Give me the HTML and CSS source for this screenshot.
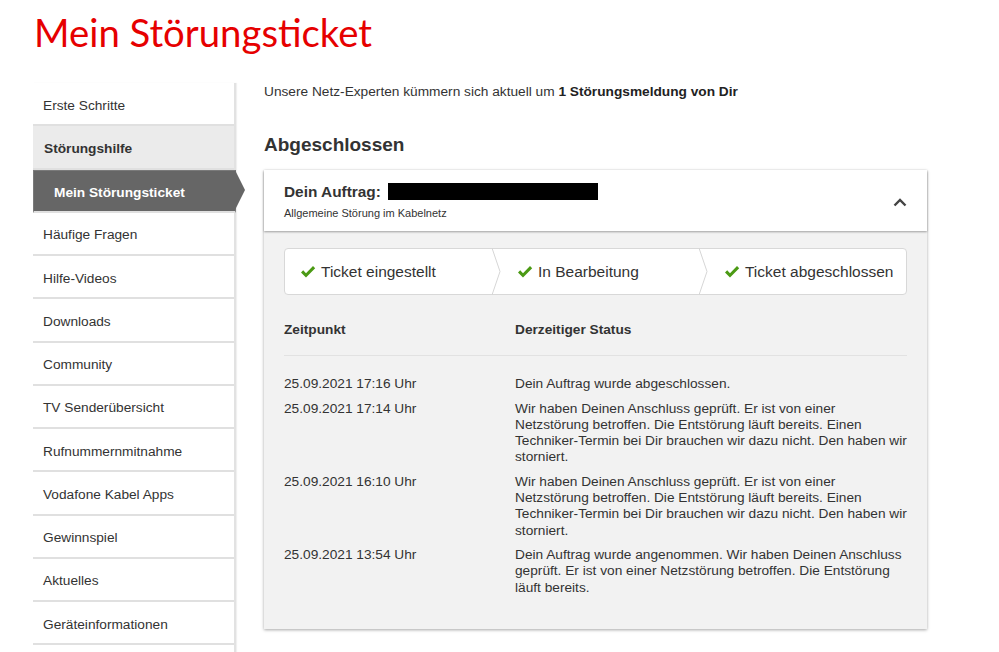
FILE: index.html
```html
<!DOCTYPE html>
<html lang="de">
<head>
<meta charset="utf-8">
<title>Mein Störungsticket</title>
<link rel="stylesheet" href="styles.css">
</head>
<body>
<div class="page">
  <h1 class="title">Mein Störungsticket</h1>
  <div class="layout">
    <nav class="sidebar">
      <a class="nav-item">Erste Schritte</a>
      <a class="nav-item nav-section">Störungshilfe</a>
      <a class="nav-item nav-active">Mein Störungsticket</a>
      <a class="nav-item">Häufige Fragen</a>
      <a class="nav-item">Hilfe-Videos</a>
      <a class="nav-item">Downloads</a>
      <a class="nav-item">Community</a>
      <a class="nav-item">TV Senderübersicht</a>
      <a class="nav-item">Rufnummernmitnahme</a>
      <a class="nav-item">Vodafone Kabel Apps</a>
      <a class="nav-item">Gewinnspiel</a>
      <a class="nav-item">Aktuelles</a>
      <a class="nav-item">Geräteinformationen</a>
    </nav>
    <main class="main">
      <p class="intro">Unsere Netz-Experten kümmern sich aktuell um <b>1 Störungsmeldung von Dir</b></p>
      <h2 class="section-title">Abgeschlossen</h2>
      <section class="card">
        <header class="card-head">
          <div class="card-head-text">
            <div class="order"><span class="order-label">Dein Auftrag:</span><span class="redacted"></span></div>
            <div class="order-sub">Allgemeine Störung im Kabelnetz</div>
          </div>
          <svg class="chev" width="14" height="9" viewBox="0 0 14 9"><polyline points="1.5,7.5 7,2 12.5,7.5" fill="none" stroke="#444" stroke-width="2.4"/></svg>
        </header>
        <div class="card-body">
          <div class="steps">
            <div class="step"><svg class="check" width="16" height="14" viewBox="0 0 16 14"><path d="M1 7.5 L3.2 5.3 L6 8.2 L13 1 L15.2 3.2 L6 12.6 Z" fill="#4b9a14"/></svg>Ticket eingestellt</div>
            <div class="step step-next"><svg class="sep" width="10" height="47" viewBox="0 0 10 47"><polyline points="0,0 8,23.5 0,47" fill="none" stroke="#d6d6d6" stroke-width="1"/></svg><svg class="check" width="16" height="14" viewBox="0 0 16 14"><path d="M1 7.5 L3.2 5.3 L6 8.2 L13 1 L15.2 3.2 L6 12.6 Z" fill="#4b9a14"/></svg>In Bearbeitung</div>
            <div class="step step-next"><svg class="sep" width="10" height="47" viewBox="0 0 10 47"><polyline points="0,0 8,23.5 0,47" fill="none" stroke="#d6d6d6" stroke-width="1"/></svg><svg class="check" width="16" height="14" viewBox="0 0 16 14"><path d="M1 7.5 L3.2 5.3 L6 8.2 L13 1 L15.2 3.2 L6 12.6 Z" fill="#4b9a14"/></svg>Ticket abgeschlossen</div>
          </div>
          <div class="table">
            <div class="row row-head"><div class="col-time">Zeitpunkt</div><div class="col-status">Derzeitiger Status</div></div>
            <div class="rows">
              <div class="row"><div class="col-time">25.09.2021 17:16 Uhr</div><div class="col-status">Dein Auftrag wurde abgeschlossen.</div></div>
              <div class="row"><div class="col-time">25.09.2021 17:14 Uhr</div><div class="col-status">Wir haben Deinen Anschluss geprüft. Er ist von einer Netzstörung betroffen. Die Entstörung läuft bereits. Einen Techniker-Termin bei Dir brauchen wir dazu nicht. Den haben wir storniert.</div></div>
              <div class="row"><div class="col-time">25.09.2021 16:10 Uhr</div><div class="col-status">Wir haben Deinen Anschluss geprüft. Er ist von einer Netzstörung betroffen. Die Entstörung läuft bereits. Einen Techniker-Termin bei Dir brauchen wir dazu nicht. Den haben wir storniert.</div></div>
              <div class="row"><div class="col-time">25.09.2021 13:54 Uhr</div><div class="col-status">Dein Auftrag wurde angenommen. Wir haben Deinen Anschluss geprüft. Er ist von einer Netzstörung betroffen. Die Entstörung läuft bereits.</div></div>
            </div>
          </div>
        </div>
      </section>
    </main>
  </div>
</div>
</body>
</html>
```
FILE: styles.css
```css
* { box-sizing: border-box; }
html, body { margin: 0; padding: 0; background: #fff; }
body {
  font-family: "Liberation Sans", Arial, sans-serif;
  color: #333;
  overflow: hidden;
  height: 652px;
}
.page { padding-left: 33px; }
.title {
  margin: 0;
  padding-top: 7px;
  height: 83px;
  font-family: Lato, "Open Sans", sans-serif;
  font-weight: 400;
  font-size: 38.3px;
  line-height: 50px;
  color: #e60000;
  padding-left: 1px;
}
.layout { display: flex; align-items: flex-start; }
.sidebar {
  width: 203px;
  flex: none;
  display: flex;
  flex-direction: column;
  border-right: 2px solid #e2e2e2;
  box-shadow: 1px 0 1px rgba(0,0,0,0.06);
  min-height: 580px;
}
.nav-item {
  display: flex;
  align-items: center;
  height: 43.25px;
  padding: 0 10px;
  font-size: 13.7px;
  color: #333;
  border-bottom: 2px solid #e0e0e0;
  padding-top: 3px;
}
.nav-section {
  background: #ebebeb;
  font-weight: bold;
  padding-left: 11px;
}
.nav-active {
  position: relative;
  background: #666;
  color: #fff;
  font-weight: bold;
  padding-left: 20px;
  border: 1px solid #7a7a7a;
  border-bottom: 2px solid #e0e0e0;
  margin-right: -2px;
}
.nav-active::after {
  content: "";
  position: absolute;
  right: -10px;
  top: -1px;
  border-top: 20.6px solid transparent;
  border-bottom: 20.6px solid transparent;
  border-left: 10px solid #666;
}
.main {
  margin-left: 28px;
  width: 663px;
  flex: none;
}
.intro {
  margin: 0;
  padding-top: 1px;
  font-size: 13.7px;
  line-height: 16px;
  color: #333;
}
.intro b { color: #222; }
.section-title {
  margin: 0;
  padding-top: 34px;
  font-size: 19px;
  line-height: 22px;
  font-weight: bold;
  color: #333;
  height: 70px;
}
.card {
  background: #f2f2f2;
  box-shadow: 0 1px 3px rgba(0,0,0,0.35);
}
.card-head {
  background: #fff;
  height: 61px;
  display: flex;
  align-items: center;
  justify-content: space-between;
  padding: 0 20px 0 20px;
  box-shadow: 0 1px 2px rgba(0,0,0,0.35);
  position: relative;
}
.order { display: flex; align-items: center; }
.order-label { font-size: 15.4px; font-weight: bold; color: #333; }
.redacted {
  display: inline-block;
  width: 210px;
  height: 17px;
  background: #000;
  margin-left: 7px;
}
.order-sub { font-size: 11px; color: #333; margin-top: 6px; }
.chev { margin-right: 0; margin-top: 4px; }
.card-body { padding: 17px 20px 33px 20px; }
.steps {
  display: flex;
  align-items: stretch;
  height: 47px;
  background: #fff;
  border: 1px solid #d8d8d8;
  border-radius: 4px;
}
.step {
  width: 33.333%;
  flex: none;
  display: flex;
  align-items: center;
  padding-left: 15px;
  font-size: 15.5px;
  color: #333;
  white-space: nowrap;
}
.step-next { padding-left: 0; }
.check { margin-right: 5px; flex: none; }
.sep { flex: none; margin: -1px 15px -1px 0; align-self: stretch; height: 47px; }
.table { margin-top: 27px; }
.row { display: flex; font-size: 13.7px; line-height: 16.3px; }
.row-head {
  font-weight: bold;
  padding-bottom: 17px;
  border-bottom: 1px solid #e2e2e2;
  margin-bottom: 20px;
}
.col-time { width: 231px; flex: none; }
.col-status { width: 392px; flex: none; }
.rows { display: flex; flex-direction: column; gap: 8px; }
```
